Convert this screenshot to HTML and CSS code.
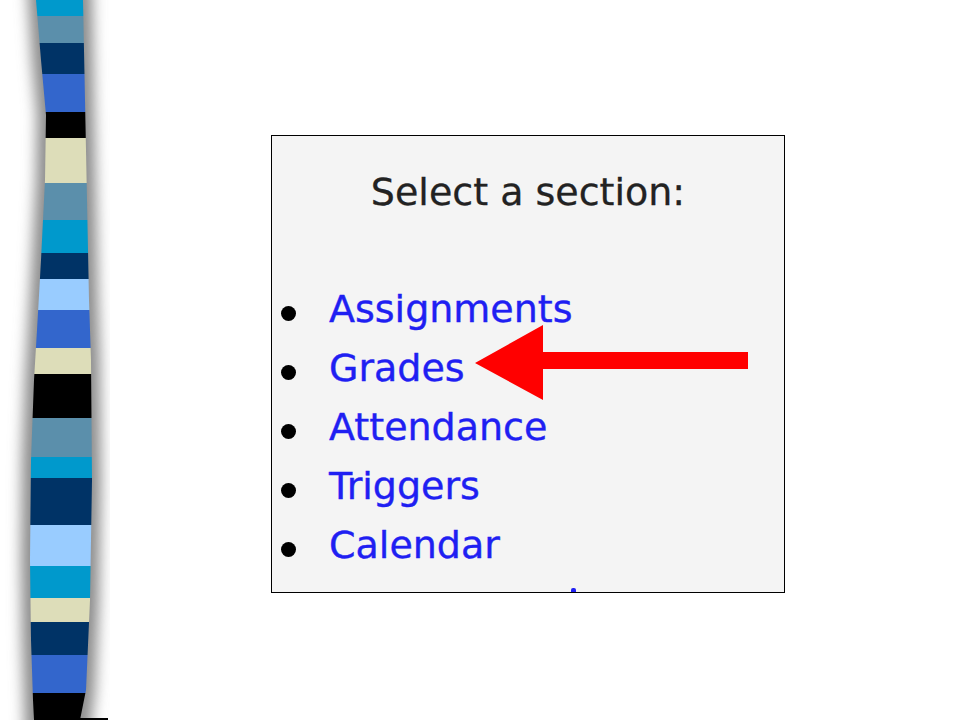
FILE: index.html
```html
<!DOCTYPE html>
<html>
<head>
	<meta charset="UTF-8">
	<meta name="viewport" content="width=device-width, initial-scale=1.0">
	<title>Select a section</title>
<link rel="stylesheet" href="styles.css">
</head>
<body>
<div class="slide">
	<!-- decorative ribbon down the left edge -->
	<svg class="ribbon" width="110" height="720" viewBox="0 0 110 720">
		<defs>
			<clipPath id="ribbonShape">
				<path d="M36 0 L41 60 L46 115 L45 180 L41 260 L37 330 L34 380 L31 460 L30 560 L31 640 L33 700 L34 720 L80 720 L86 690 L90 600 L92 480 L91 360 L89 300 L87 200 L85 100 L83 0 Z"/>
			</clipPath>
			<filter id="soft" x="-50%" y="-5%" width="200%" height="110%">
				<feGaussianBlur stdDeviation="7"/>
			</filter>
		</defs>
		<path filter="url(#soft)" fill="#8c8c8c" stroke="#8c8c8c" stroke-width="18"
			d="M36 -20 L41 60 L46 115 L45 180 L41 260 L37 330 L34 380 L31 460 L30 560 L31 640 L33 700 L34 740 L80 740 L86 690 L90 600 L92 480 L91 360 L89 300 L87 200 L85 100 L83 -20 Z"/>
		<g clip-path="url(#ribbonShape)">
			<rect x="0" y="0" width="110" height="16" fill="#0099cc"/>
			<rect x="0" y="16" width="110" height="27" fill="#5b8fab"/>
			<rect x="0" y="43" width="110" height="31" fill="#003366"/>
			<rect x="0" y="74" width="110" height="38" fill="#3366cc"/>
			<rect x="0" y="112" width="110" height="26" fill="#000000"/>
			<rect x="0" y="138" width="110" height="45" fill="#ddddb9"/>
			<rect x="0" y="183" width="110" height="37" fill="#5b8fab"/>
			<rect x="0" y="220" width="110" height="33" fill="#0099cc"/>
			<rect x="0" y="253" width="110" height="26" fill="#003366"/>
			<rect x="0" y="279" width="110" height="31" fill="#99ccff"/>
			<rect x="0" y="310" width="110" height="38" fill="#3366cc"/>
			<rect x="0" y="348" width="110" height="26" fill="#ddddb9"/>
			<rect x="0" y="374" width="110" height="44" fill="#000000"/>
			<rect x="0" y="418" width="110" height="39" fill="#5b8fab"/>
			<rect x="0" y="457" width="110" height="21" fill="#0099cc"/>
			<rect x="0" y="478" width="110" height="47" fill="#003366"/>
			<rect x="0" y="525" width="110" height="41" fill="#99ccff"/>
			<rect x="0" y="566" width="110" height="32" fill="#0099cc"/>
			<rect x="0" y="598" width="110" height="24" fill="#ddddb9"/>
			<rect x="0" y="622" width="110" height="33" fill="#003366"/>
			<rect x="0" y="655" width="110" height="38" fill="#3366cc"/>
			<rect x="0" y="693" width="110" height="27" fill="#000000"/>
		</g>
		<rect x="80" y="718" width="28" height="2" fill="#000000"/>
	</svg>

	<div class="content">
		<div class="shot">
			<h2 class="shot-title">Select a section:</h2>
			<ul class="sections">
				<li><a href="#">Assignments</a></li>
				<li><a href="#">Grades</a></li>
				<li><a href="#">Attendance</a></li>
				<li><a href="#">Triggers</a></li>
				<li><a href="#">Calendar</a></li>
			</ul>
			<!-- the next link is cut off by the crop, only its i-dot shows -->
			<span class="cut-dot"></span>

			<!-- red arrow pointing at Grades -->
			<svg class="arrow" width="273" height="75" viewBox="0 0 273 75">
				<polygon points="0,38 68,0 68,27 273,27 273,44 68,44 68,75" fill="#ff0000"/>
			</svg>
		</div>
	</div>
</div>
</body>
</html>
```

FILE: styles.css
```css
body {
	margin: 0;
	background: white;
	font-family: "DejaVu Sans", Verdana, sans-serif;
}
.slide {
	display: flex;
	width: 960px;
	height: 720px;
	overflow: hidden;
}
.ribbon {
	flex: none;
	display: block;
}
.content {
	flex: 1;
	padding: 135px 0 0 161px;
}
.shot {
	position: relative; /* anchor for the arrow */
	width: 512px;
	height: 456px;
	background: #f4f4f4;
	border: 1px solid black;
	overflow: hidden;
}
.shot-title {
	margin: 0;
	padding-top: 34px;
	text-align: center;
	font-size: 38px;
	font-weight: normal;
	line-height: 44px;
	color: #222;
	-webkit-text-stroke: 0.3px #222;
}
.sections {
	list-style: none;
	margin: 66px 0 0 0;
	padding: 0 0 0 9px;
}
.sections li {
	display: flex;
	align-items: center;
	height: 59px;
	font-size: 38px;
	line-height: 59px;
}
.sections li::before {
	content: "";
	flex: none;
	width: 15px;
	height: 15px;
	margin: 8px 33px 0 0;
	border-radius: 50%;
	background: black;
}
.sections a {
	color: #1f1ff2;
	text-decoration: none;
	-webkit-text-stroke: 0.4px #1f1ff2;
}
.cut-dot {
	position: absolute;
	left: 299px;
	bottom: 0;
	width: 5px;
	height: 4px;
	border-radius: 2px 2px 0 0;
	background: #1f1ff2;
}
.arrow {
	position: absolute;
	left: 203px;
	top: 189px;
	display: block;
}
```
